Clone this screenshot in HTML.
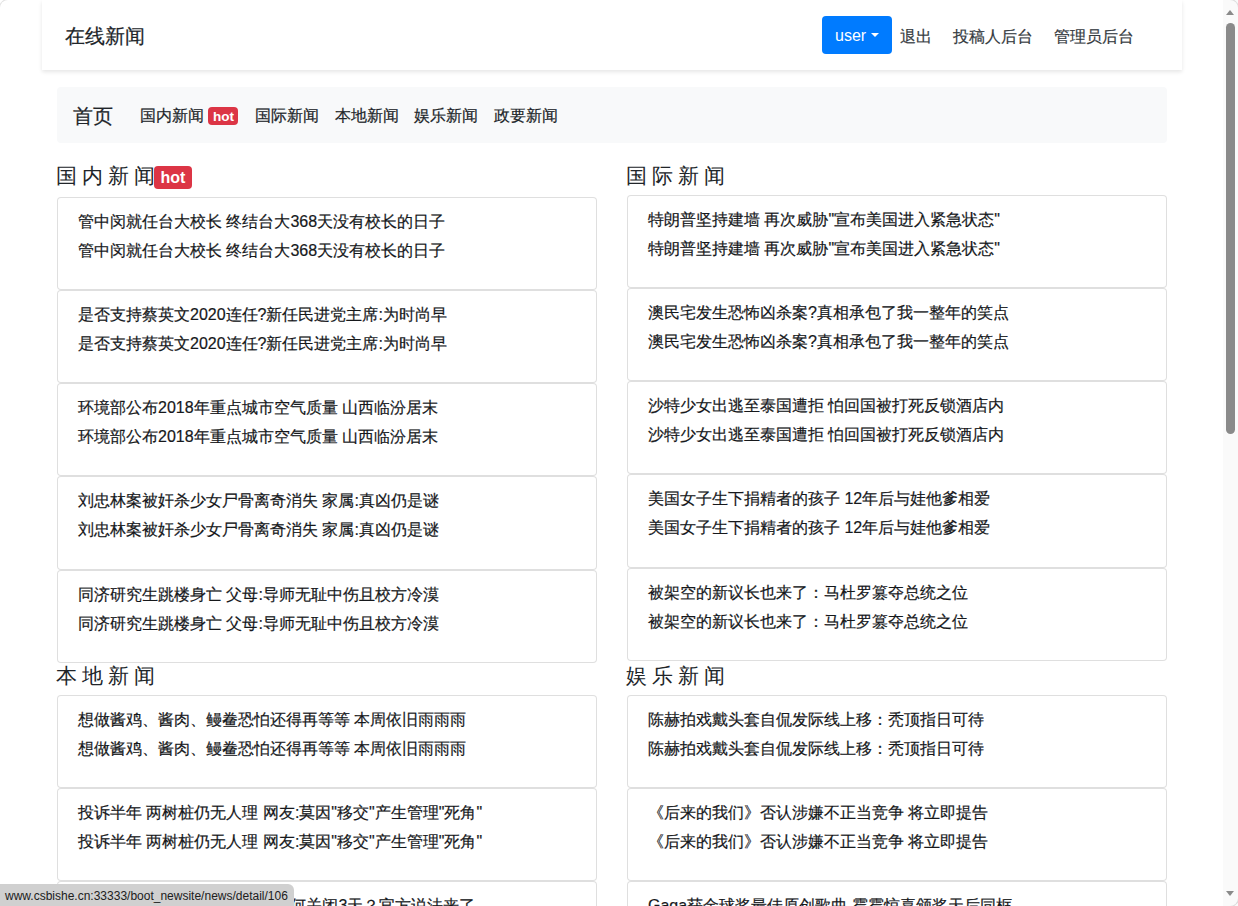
<!DOCTYPE html>
<html><head><meta charset="utf-8"><title>在线新闻</title>
<style>
html,body{margin:0;padding:0;overflow:hidden;width:1238px;height:906px;background:#fff}
body{font-family:"Liberation Sans",sans-serif;color:#16181b;-webkit-text-stroke-width:0.2px;font-size:16px;line-height:1.5;position:relative}
*{box-sizing:border-box}
h5,h6,p{margin:0;font-weight:400}
.topnav{position:absolute;left:42px;top:0;width:1140px;height:70px;background:#fff;box-shadow:0 .125rem .25rem rgba(0,0,0,.1)}
.brand{position:absolute;left:23px;top:21px;font-size:20px;line-height:30px;color:#212529}
.ubtn{position:absolute;left:780px;top:16px;width:70px;height:38px;background:#007bff;border-radius:4px;color:#fff;font-size:16px;line-height:40px;padding-left:13px}
.caret{position:absolute;left:49px;top:17px;width:0;height:0;border-top:4px solid #fff;border-left:4px solid transparent;border-right:4px solid transparent}
.tl{position:absolute;top:24.5px;font-size:16px;line-height:24px;color:#343a40}
.bar{position:absolute;left:57px;top:87px;width:1110px;height:56px;background:#f8f9fa;border-radius:4px}
.home{position:absolute;left:15.5px;top:14px;font-size:20px;line-height:30px;color:#212529}
.nl{position:absolute;top:16.8px;font-size:16px;line-height:24px;color:#212529}
.badge{display:inline-block;background:#dc3545;color:#fff;font-weight:700;border-radius:4px;text-align:center;vertical-align:top}
.col{position:absolute;width:540px}
.sect h5{font-size:20px;line-height:24px;height:24px;margin-bottom:8px;position:relative}
.sect h5 .t{position:relative;top:1.4px;left:-1px;-webkit-text-stroke-width:0;color:#212529;font-size:20.5px;letter-spacing:-0.35px}
.b2{position:absolute;left:97px;top:3px;font-size:16px;line-height:23px;width:38px;height:23px}
.card{border:1px solid rgba(0,0,0,.125);border-radius:4px;background:#fff}
.cb{padding:12px 20px}
.cb h6{font-size:16px;line-height:19.2px;margin-bottom:8px;position:relative;top:2px}
.cb p{font-size:16px;line-height:24px;margin-bottom:16px;position:relative;top:1.8px}
.sb{position:absolute;left:1223px;top:0;width:15px;height:906px;background:#fafafa}
.thumb{position:absolute;left:3px;top:23px;width:9px;height:411px;background:#8a8a8a;border-radius:5px}
.up{position:absolute;left:3px;top:10px;border-bottom:5px solid #8a8a8a;border-left:4.75px solid transparent;border-right:4.75px solid transparent}
.dn{position:absolute;left:3px;top:891px;border-top:5px solid #8a8a8a;border-left:4.75px solid transparent;border-right:4.75px solid transparent}
.ubtn,.badge{-webkit-text-stroke-width:0}
.cnr{position:absolute;width:12px;height:12px;border:1px solid rgba(0,0,0,.12);box-shadow:0 0 0 4px #f0f0f0}
.status{position:absolute;left:0;top:884px;width:294px;height:22px;background:#d0d0d0;border-top-right-radius:6px;font-size:12px;line-height:24px;padding-left:5px;color:#202020;-webkit-text-stroke-width:0;white-space:nowrap}
</style></head><body>
<div class="topnav">
  <div class="brand">在线新闻</div>
  <div class="ubtn">user<span class="caret"></span></div>
  <div class="tl" style="left:858px">退出</div>
  <div class="tl" style="left:911px">投稿人后台</div>
  <div class="tl" style="left:1012px">管理员后台</div>
</div>
<div class="bar">
  <div class="home">首页</div>
  <div class="nl" style="left:83px">国内新闻 <span class="badge" style="font-size:13.5px;line-height:19.5px;width:30px;height:18px;position:relative;top:3.3px">hot</span></div>
  <div class="nl" style="left:198px">国际新闻</div>
  <div class="nl" style="left:278px">本地新闻</div>
  <div class="nl" style="left:357px">娱乐新闻</div>
  <div class="nl" style="left:437px">政要新闻</div>
</div>
<div class="col sect" style="left:57px;top:162.75px">
  <h5 style="height:26px"><span class="t">国 内 新 闻</span><span class="badge b2">hot</span></h5>
  <div class="card"><div class="cb"><h6>管中闵就任台大校长 终结台大368天没有校长的日子</h6><p>管中闵就任台大校长 终结台大368天没有校长的日子</p></div></div><div class="card"><div class="cb"><h6>是否支持蔡英文2020连任?新任民进党主席:为时尚早</h6><p>是否支持蔡英文2020连任?新任民进党主席:为时尚早</p></div></div><div class="card"><div class="cb"><h6>环境部公布2018年重点城市空气质量 山西临汾居末</h6><p>环境部公布2018年重点城市空气质量 山西临汾居末</p></div></div><div class="card"><div class="cb"><h6>刘忠林案被奸杀少女尸骨离奇消失 家属:真凶仍是谜</h6><p>刘忠林案被奸杀少女尸骨离奇消失 家属:真凶仍是谜</p></div></div><div class="card"><div class="cb"><h6>同济研究生跳楼身亡 父母:导师无耻中伤且校方冷漠</h6><p>同济研究生跳楼身亡 父母:导师无耻中伤且校方冷漠</p></div></div>
</div>
<div class="col sect" style="left:627px;top:162.75px">
  <h5><span class="t">国 际 新 闻</span></h5>
  <div class="card"><div class="cb"><h6>特朗普坚持建墙 再次威胁"宣布美国进入紧急状态"</h6><p>特朗普坚持建墙 再次威胁"宣布美国进入紧急状态"</p></div></div><div class="card"><div class="cb"><h6>澳民宅发生恐怖凶杀案?真相承包了我一整年的笑点</h6><p>澳民宅发生恐怖凶杀案?真相承包了我一整年的笑点</p></div></div><div class="card"><div class="cb"><h6>沙特少女出逃至泰国遭拒 怕回国被打死反锁酒店内</h6><p>沙特少女出逃至泰国遭拒 怕回国被打死反锁酒店内</p></div></div><div class="card"><div class="cb"><h6>美国女子生下捐精者的孩子 12年后与娃他爹相爱</h6><p>美国女子生下捐精者的孩子 12年后与娃他爹相爱</p></div></div><div class="card"><div class="cb"><h6>被架空的新议长也来了：马杜罗篡夺总统之位</h6><p>被架空的新议长也来了：马杜罗篡夺总统之位</p></div></div>
</div>
<div class="col sect" style="left:57px;top:662.75px">
  <h5><span class="t">本 地 新 闻</span></h5>
  <div class="card"><div class="cb"><h6>想做酱鸡、酱肉、鳗鲞恐怕还得再等等 本周依旧雨雨雨</h6><p>想做酱鸡、酱肉、鳗鲞恐怕还得再等等 本周依旧雨雨雨</p></div></div><div class="card"><div class="cb"><h6>投诉半年 两树桩仍无人理 网友:莫因"移交"产生管理"死角"</h6><p>投诉半年 两树桩仍无人理 网友:莫因"移交"产生管理"死角"</p></div></div><div class="card"><div class="cb"><h6>杭州西湖断桥景区 封闭施工为何关闭3天？官方说法来了</h6><p>杭州西湖断桥景区 封闭施工为何关闭3天？官方说法来了</p></div></div>
</div>
<div class="col sect" style="left:627px;top:662.75px">
  <h5><span class="t">娱 乐 新 闻</span></h5>
  <div class="card"><div class="cb"><h6>陈赫拍戏戴头套自侃发际线上移：秃顶指日可待</h6><p>陈赫拍戏戴头套自侃发际线上移：秃顶指日可待</p></div></div><div class="card"><div class="cb"><h6>《后来的我们》否认涉嫌不正当竞争 将立即提告</h6><p>《后来的我们》否认涉嫌不正当竞争 将立即提告</p></div></div><div class="card"><div class="cb"><h6>Gaga获金球奖最佳原创歌曲 霉霉惊喜颁奖天后同框</h6><p>Gaga获金球奖最佳原创歌曲 霉霉惊喜颁奖天后同框</p></div></div>
</div>
<div class="status">www.csbishe.cn:33333/boot_newsite/news/detail/106</div>
<div class="sb"><div class="up"></div><div class="thumb"></div><div class="dn"></div></div>
<div class="cnr" style="right:-1px;top:-1px;border-top-right-radius:9px;border-left:none;border-bottom:none;box-shadow:none"></div>
<div class="cnr" style="right:-1px;bottom:-1px;border-bottom-right-radius:9px;border-left:none;border-top:none;box-shadow:none"></div>
<div class="cnr" style="left:-1px;top:-1px;border-top-left-radius:9px;border-right:none;border-bottom:none;box-shadow:none"></div>
</body></html>
